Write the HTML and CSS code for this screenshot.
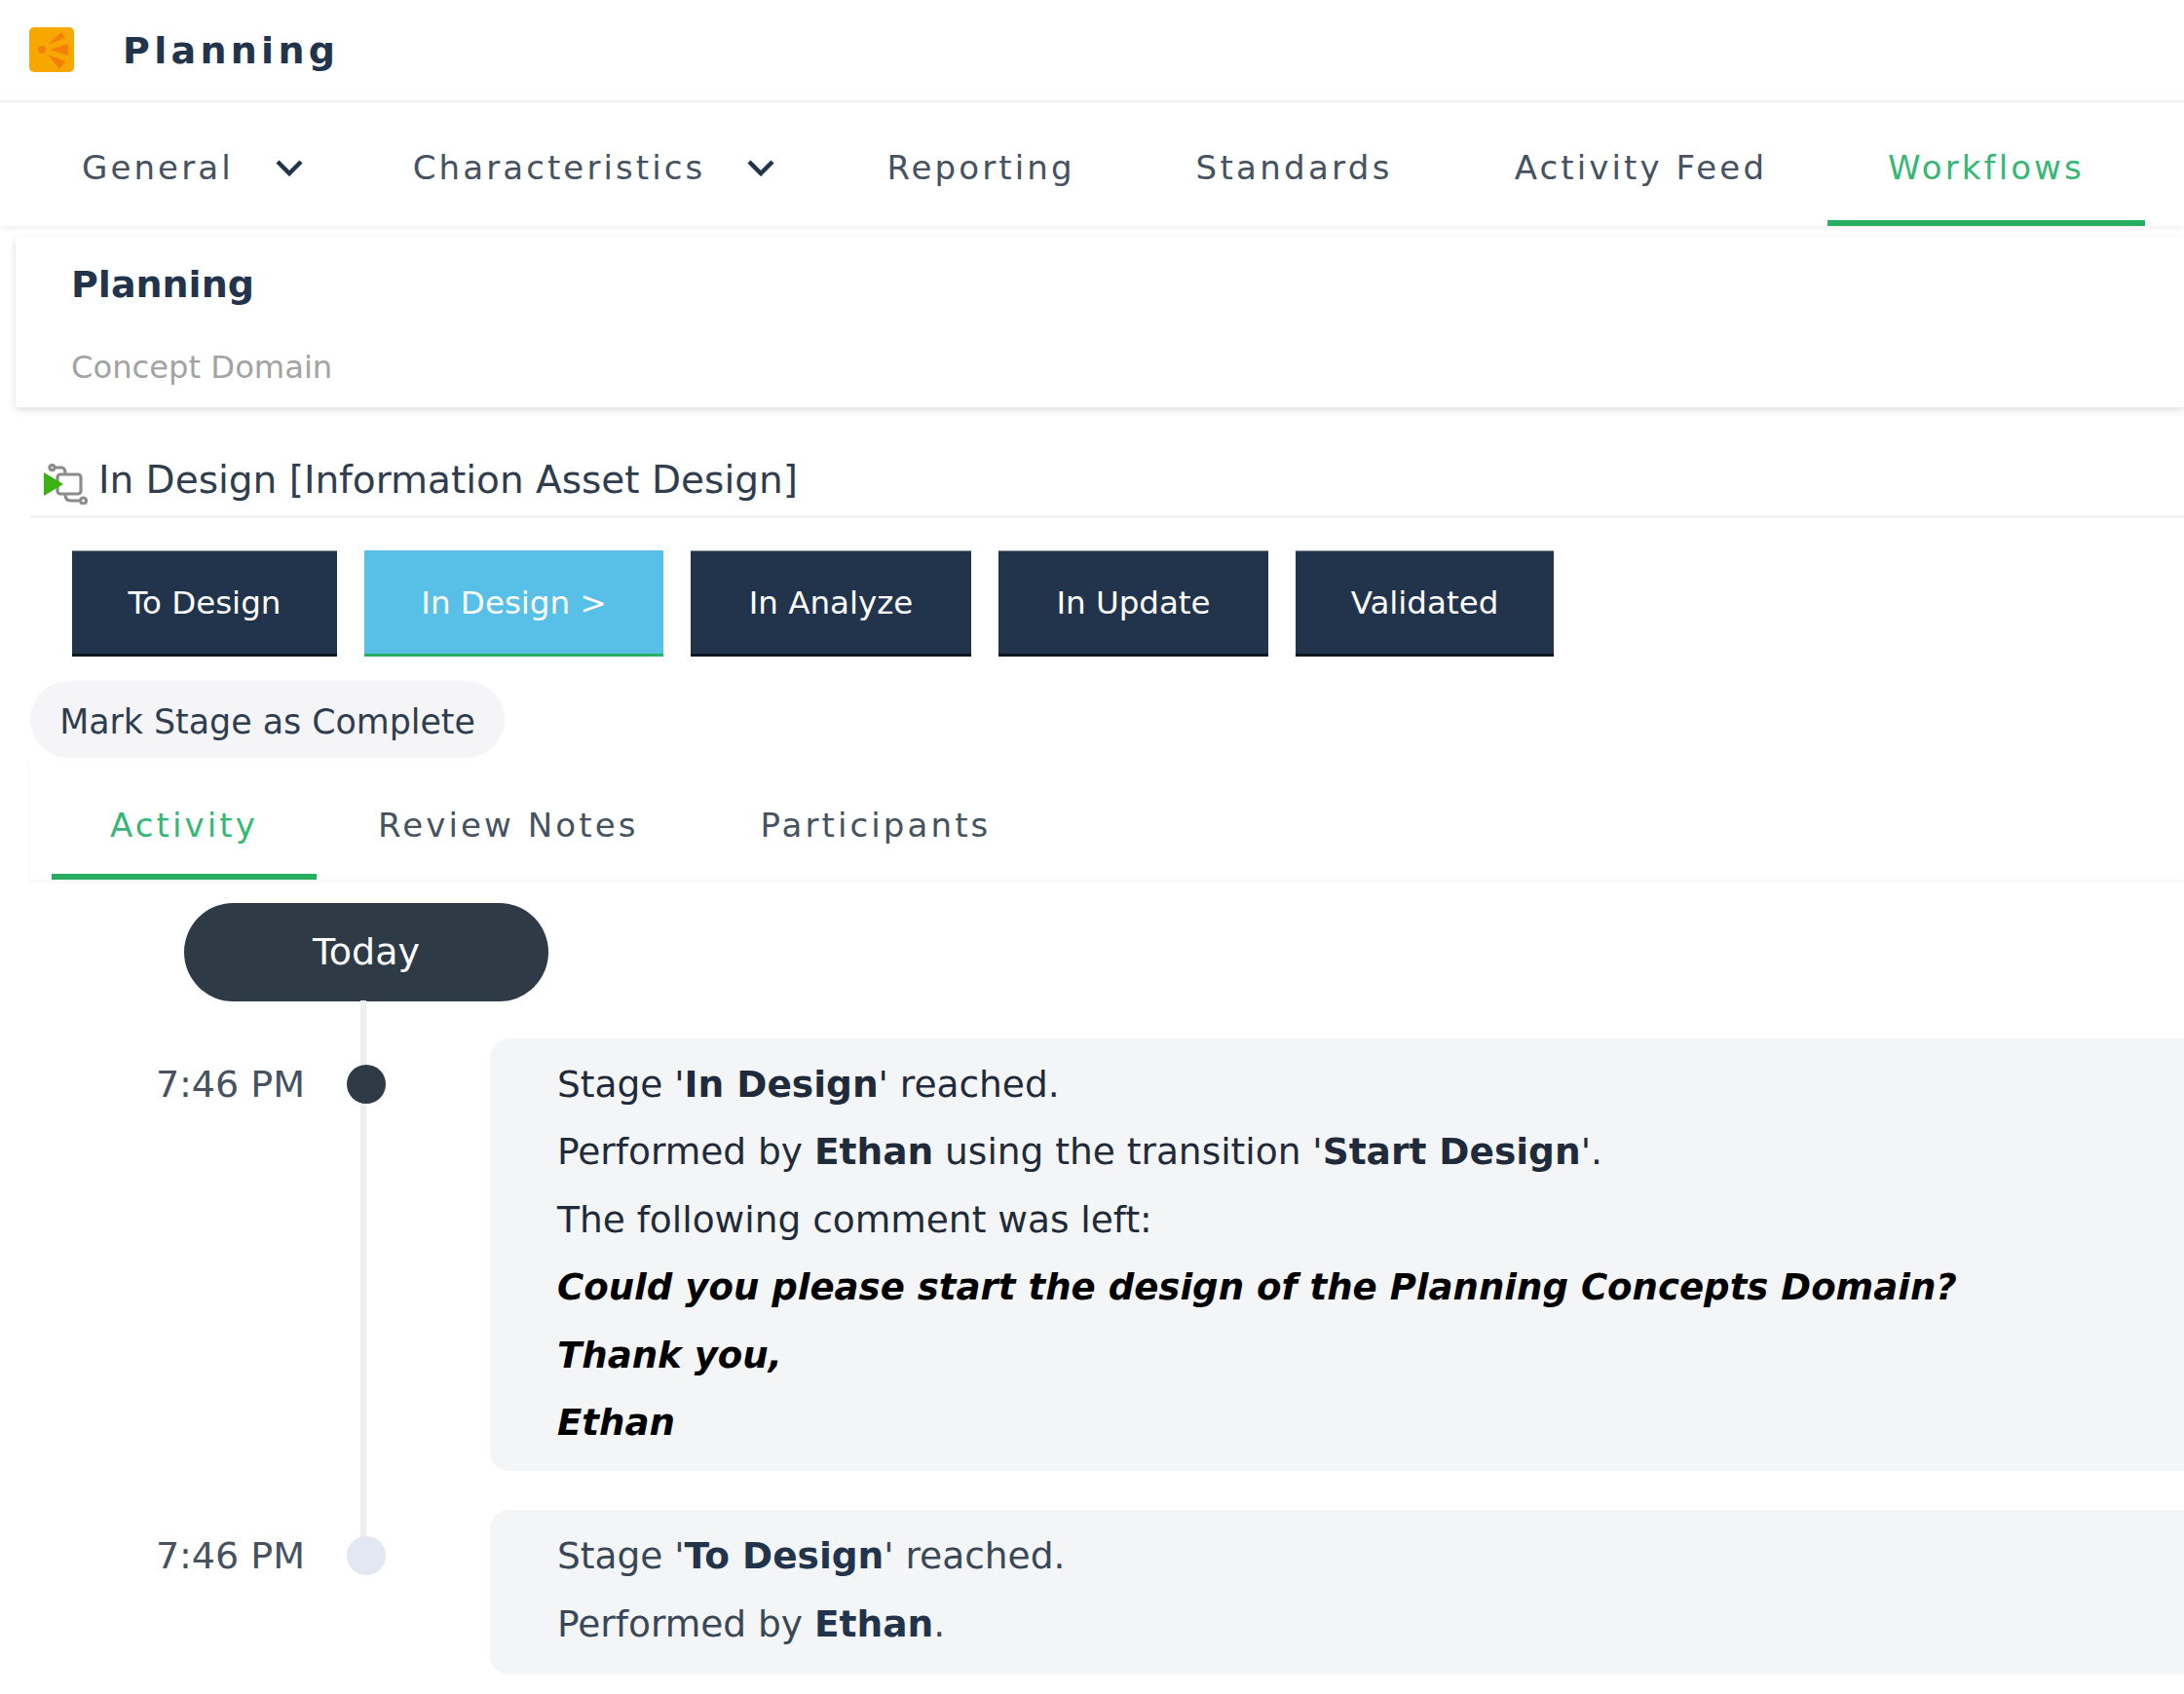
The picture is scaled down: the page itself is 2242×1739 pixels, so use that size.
FILE: index.html
```html
<!DOCTYPE html>
<html>
<head>
	<title>Planning</title>
	<meta charset="UTF-8">
	<link rel="stylesheet" href="styles.css">
</head>
<body>

<header class="topbar">
	<svg class="logo" viewBox="0 0 46 46">
		<rect width="46" height="46" rx="5" fill="#f6a800"/>
		<circle cx="13" cy="23" r="4" fill="#f57f0a"/>
		<path d="M19 18 L33 5 L37 11 Z M21 23 L40 17 L40 29 Z M19 28 L37 35 L31 43 Z" fill="#f57f0a"/>
	</svg>
	<span class="topbar-title">Planning</span>
</header>

<nav class="tabs main-tabs">
	<a class="tab has-menu first">General
		<svg class="chevron" viewBox="0 0 30 18"><path d="M3 3 L15 15 L27 3"/></svg>
	</a>
	<a class="tab has-menu">Characteristics
		<svg class="chevron" viewBox="0 0 30 18"><path d="M3 3 L15 15 L27 3"/></svg>
	</a>
	<a class="tab">Reporting</a>
	<a class="tab wide">Standards</a>
	<a class="tab">Activity Feed</a>
	<a class="tab active">Workflows</a>
</nav>

<section class="card">
	<h1>Planning</h1>
	<p>Concept Domain</p>
</section>

<div class="workflow-head">
	<svg class="wf-icon" viewBox="0 0 46 42">
		<g fill="none" stroke="#8c8c8c" stroke-width="3.2">
			<rect x="15" y="11" width="24" height="20" rx="3"/>
			<circle cx="9.5" cy="4" r="2.6"/>
			<path d="M13 4 H19 Q23 4 23 10"/>
			<path d="M23 32 Q23 38 29 38 H37"/>
			<circle cx="41.5" cy="38" r="3"/>
		</g>
		<path d="M1 9 L21 21 L1 33 Z" fill="#3cb312"/>
	</svg>
	<span>In Design [Information Asset Design]</span>
</div>

<div class="stages">
	<button class="stage s1">To Design</button>
	<button class="stage s2 current">In Design &gt;</button>
	<button class="stage s3">In Analyze</button>
	<button class="stage s4">In Update</button>
	<button class="stage s5">Validated</button>
</div>

<button class="complete">Mark Stage as Complete</button>

<nav class="tabs sub-tabs">
	<a class="tab active">Activity</a>
	<a class="tab notes">Review Notes</a>
	<a class="tab">Participants</a>
</nav>

<section class="timeline">
	<div class="day">Today</div>
	<div class="entry">
		<time>7:46 PM</time>
		<i class="dot"></i>
		<div class="bubble">
			<p>Stage '<b>In Design</b>' reached.</p>
			<p>Performed by <b>Ethan</b> using the transition '<b>Start Design</b>'.</p>
			<p>The following comment was left:</p>
			<p class="comment">Could you please start the design of the Planning Concepts Domain?</p>
			<p class="comment">Thank you,</p>
			<p class="comment">Ethan</p>
		</div>
	</div>
	<div class="entry old">
		<time>7:46 PM</time>
		<i class="dot"></i>
		<div class="bubble">
			<p>Stage '<b>To Design</b>' reached.</p>
			<p>Performed by <b>Ethan</b>.</p>
		</div>
	</div>
</section>

</body>
</html>
```

FILE: styles.css
```css
html, body {
	margin: 0;
	background: #fff;
	color: #2f3d4e;
	font-family: "DejaVu Sans", sans-serif;
	font-size: 37.5px;
	overflow: hidden;
	height: 1739px;
}
p, h1 { margin: 0; }
b { font-weight: bold; }

.topbar {
	height: 105px;
	box-sizing: border-box;
	display: flex;
	align-items: center;
	padding: 0 0 0 30px;
	border-bottom: 2px solid #f0f1f2;
}
.logo { width: 46px; height: 46px; margin-top: -2px; }
.topbar-title {
	margin-left: 50px;
	font-size: 38px;
	font-weight: bold;
	letter-spacing: 4.3px;
	color: #22344b;
}

.tabs { display: flex; }
.tab {
	display: flex;
	align-items: center;
	box-sizing: border-box;
	white-space: nowrap;
	letter-spacing: 3.1px;
	font-size: 34px;
	color: #46525f;
	border-bottom: 6px solid transparent;
}
.tab.active {
	color: #35b776;
	border-bottom-color: #27ae60;
}

.main-tabs {
	height: 127px;
	padding-left: 22px;
	box-shadow: 0 2px 5px rgba(0, 0, 0, 0.07);
}
.main-tabs .tab { padding: 12px 62px 0; }
.main-tabs .has-menu { padding-right: 52px; }
.main-tabs .first { padding-right: 50px; }
.main-tabs .wide { padding-right: 63px; letter-spacing: 3.3px; }
.chevron {
	width: 30px;
	height: 18px;
	margin-left: 42px;
	fill: none;
	stroke: #22344b;
	stroke-width: 4.5;
}

.card {
	margin: 11px 0 0 16px;
	height: 175px;
	box-sizing: border-box;
	padding: 26px 57px;
	box-shadow: 0 3px 8px rgba(0, 0, 0, 0.13);
}
.card h1 {
	font-size: 38px;
	line-height: 46px;
	color: #22344b;
}
.card p {
	margin-top: 42px;
	font-size: 32.2px;
	line-height: 40px;
	color: #a3a3a3;
}

.workflow-head {
	margin: 50px 0 0 31px;
	height: 61px;
	display: flex;
	align-items: flex-start;
	border-bottom: 3px solid #f2f2f3;
	font-size: 39px;
	line-height: 50px;
}
.wf-icon { width: 46px; height: 42px; margin: 8px 11px 0 13px; }

.stages {
	display: flex;
	gap: 28px;
	margin: 33px 0 0 74px;
}
.stage {
	height: 109px;
	border: 0;
	border-top: 1px solid #8a94a0;
	border-bottom: 3px solid #0d1520;
	background: #22344b;
	color: #fff;
	font: 32.5px "DejaVu Sans", sans-serif;
	padding: 0;
}
.stage.current { background: #58bfe6; border-top-color: #58bfe6; border-bottom-color: #27ae60; }
.s1 { width: 272px; }
.s2 { width: 307px; }
.s3 { width: 288px; }
.s4 { width: 277px; }
.s5 { width: 265px; }

.complete {
	display: block;
	margin: 25px 0 0 31px;
	width: 487px;
	height: 79px;
	border: 0;
	border-radius: 40px;
	background: #f5f5f7;
	color: #2f3d4e;
	font: 34.8px "DejaVu Sans", sans-serif;
	padding: 4px 0 0;
}

.sub-tabs {
	height: 125px;
	margin-left: 31px;
	padding-left: 22px;
	box-shadow: 0 2px 4px rgba(0, 0, 0, 0.05);
}
.sub-tabs .tab { padding: 18px 61px 0; }
.sub-tabs .active { padding: 18px 60px 0; }
.sub-tabs .notes { padding: 18px 64px 0 63px; }

.timeline {
	position: relative;
	padding-top: 24px;
}
.timeline:before {
	content: "";
	position: absolute;
	left: 370px;
	top: 124px;
	height: 570px;
	width: 6px;
	background: #eceef1;
}
.day {
	margin-left: 189px;
	width: 374px;
	height: 101px;
	line-height: 101px;
	border-radius: 51px;
	background: #2f3a47;
	color: #fff;
	text-align: center;
	font-size: 38px;
}
.entry {
	position: relative;
	display: flex;
	align-items: flex-start;
	margin-top: 38px;
}
.entry + .entry { margin-top: 40px; }
.entry time {
	width: 313px;
	padding-top: 27px;
	line-height: 40px;
	text-align: right;
	font-size: 38px;
	color: #46525f;
}
.dot {
	width: 40px;
	height: 40px;
	margin: 27px 107px 0 43px;
	border-radius: 50%;
	background: #2f3a47;
}
.old .dot { background: #e3e7f1; }
.bubble {
	flex: 1;
	padding: 13px 0 15px 69px;
	border-radius: 20px 0 0 20px;
	background: #f4f5f7;
	color: #1f2b3a;
	white-space: nowrap;
}
.old .bubble { padding-bottom: 17px; color: #3a4757; }
.old .bubble b { color: #22344b; }
.bubble p { line-height: 69.4px; }
.comment { font-weight: bold; font-style: italic; color: #000; font-size: 37.1px; }
```
